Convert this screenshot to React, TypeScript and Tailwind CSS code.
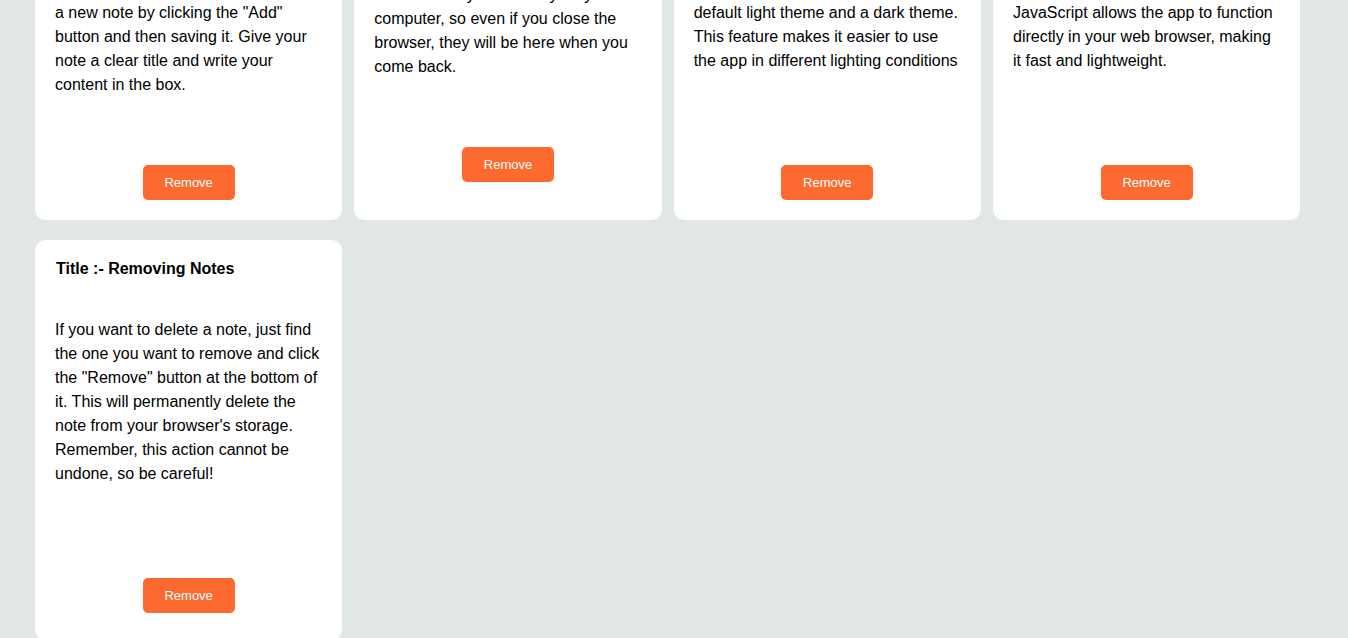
import { FC } from 'react';

interface Note {
  id: number;
  title: string;
  // lines that sit above the fold, kept as their own block so the visible text wraps the same
  lead?: string;
  body: string;
  tight?: boolean;
}

const notes: Note[] = [
  {
    id: 1,
    title: 'Title :- Adding Notes',
    lead: 'Adding notes is simple and quick. Type your thoughts into the input area at the top of the page. You can create',
    body: 'a new note by clicking the "Add" button and then saving it. Give your note a clear title and write your content in the box.',
  },
  {
    id: 2,
    title: 'Title :- Saving Notes',
    lead: 'Every note you write is saved automatically in the local storage of your browser. Nothing is sent to a server.',
    body: 'All the notes you add stay on your computer, so even if you close the browser, they will be here when you come back.',
    tight: true,
  },
  {
    id: 3,
    title: 'Title :- Themes',
    lead: 'You can switch the look of the app with the toggle in the header. The app supports two themes: the',
    body: 'default light theme and a dark theme. This feature makes it easier to use the app in different lighting conditions',
  },
  {
    id: 4,
    title: 'Title :- Technology Used',
    lead: 'This notes app is built with plain HTML, CSS and JavaScript. No frameworks or libraries are needed. Using',
    body: 'JavaScript allows the app to function directly in your web browser, making it fast and lightweight.',
  },
  {
    id: 5,
    title: 'Title :- Removing Notes',
    body: 'If you want to delete a note, just find the one you want to remove and click the "Remove" button at the bottom of it. This will permanently delete the note from your browser\'s storage. Remember, this action cannot be undone, so be careful!',
  },
];

const NoteCard: FC<{ note: Note; last?: boolean }> = ({ note, last }) => {
  return (
    <div
      className={`flex flex-col bg-white rounded-[10px] px-5 pt-[17px] pb-5 ${last ? 'min-h-[400px]' : ''}`}
    >
      <h3 className="text-[16px] leading-6 font-bold text-black pl-px">{note.title}</h3>
      <div className={`min-h-[192px] text-[16px] leading-6 text-black ${note.tight ? 'mt-[19px]' : 'mt-[37px]'}`}>
        {note.lead && <p className="h-[96px] overflow-hidden">{note.lead}</p>}
        <p>{note.body}</p>
      </div>
      <button
        type="button"
        className="mt-[68px] self-center w-[92px] h-[35px] rounded-[5px] bg-[#fd6a2f] text-white text-[13px] leading-none cursor-pointer"
      >
        Remove
      </button>
    </div>
  );
};

export default function App() {
  return (
    <div className="h-[638px] overflow-hidden bg-[#e1e6e6] font-['Liberation_Sans',Arial,sans-serif]">
      <div className="grid grid-cols-[repeat(4,307.33px)] gap-x-3 gap-y-5 ml-[35px] -mt-[173px]">
        {notes.map((note, i) => (
          <NoteCard key={note.id} note={note} last={i === notes.length - 1} />
        ))}
      </div>
    </div>
  );
}
